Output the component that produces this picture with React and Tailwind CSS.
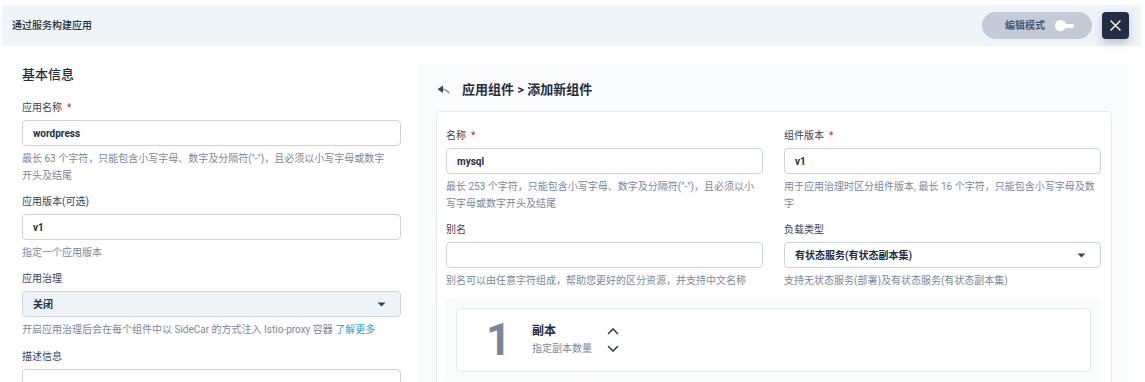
import React from "react";

const font = { fontFamily: "Roboto, 'Noto Sans CJK SC', sans-serif" };

function Label({ children, required }) {
  return (
    <div className="text-[10px] leading-4 text-[#36435c] mb-1">
      {children}
      {required && <span className="text-[#ca2621] ml-[5px]">*</span>}
    </div>
  );
}

function Input({ value }) {
  return (
    <div className="h-[26px] rounded border border-[#ccd3db] bg-white px-[10px] flex items-center text-[10px] font-bold text-[#242e42]">
      {value}
    </div>
  );
}

function Select({ value, gray }) {
  return (
    <div
      className={
        "h-[26px] rounded border border-[#ccd3db] px-[10px] flex items-center justify-between text-[10px] font-bold text-[#242e42] " +
        (gray ? "bg-[#eff4f9]" : "bg-white")
      }
    >
      <span>{value}</span>
      <svg width="9" height="5" viewBox="0 0 9 5" className="mr-[4px]">
        <path d="M0.5 0.5h8L4.5 4.5z" fill="#36435c" />
      </svg>
    </div>
  );
}

function Help({ children, narrow }) {
  return (
    <div className={"mt-1 text-[10px] leading-[17px] text-[#79879c] " + (narrow ? "pr-[10px]" : "")}>
      {children}
    </div>
  );
}

export default function App() {
  return (
    <div className="w-[1145px] h-[382px] overflow-hidden bg-white" style={font}>
      {/* header */}
      <div className="mt-[5px] ml-[2px] mr-[4px] h-[41px] bg-[#eff4f9] flex items-center justify-between pl-[10px] pr-[12px]">
        <div className="text-[10px] font-medium text-[#242e42]">通过服务构建应用</div>
        <div className="flex items-center gap-[10px]">
          <div className="w-[110px] h-[27px] rounded-full bg-[#c3ccd6] flex items-center pl-[23px] gap-[10px]">
            <span className="text-[10px] font-semibold text-[#4a5974]">编辑模式</span>
            <span className="flex items-center">
              <span className="w-[11px] h-[11px] rounded-full bg-white"></span>
              <span className="w-[9px] h-[4px] bg-white -ml-[1px] rounded-r"></span>
            </span>
          </div>
          <div className="w-[27px] h-[27px] rounded bg-[#242e42] flex items-center justify-center shadow-[0_4px_8px_rgba(36,46,66,0.25)]">
            <svg width="13" height="13" viewBox="0 0 13 13">
              <path d="M2 2l9 9M11 2L2 11" stroke="white" strokeWidth="1.4" strokeLinecap="round" />
            </svg>
          </div>
        </div>
      </div>

      <div className="flex pl-[22px]">
        {/* left column */}
        <div className="w-[379px] pt-[19px]">
          <div className="text-[13px] leading-5 font-medium text-[#242e42] mb-[15px]">基本信息</div>
          <Label required>应用名称</Label>
          <Input value="wordpress" />
          <Help narrow>最长 63 个字符，只能包含小写字母、数字及分隔符("-")，且必须以小写字母或数字开头及结尾</Help>
          <div className="mt-[10px]">
            <Label>应用版本(可选)</Label>
            <Input value="v1" />
            <Help>指定一个应用版本</Help>
          </div>
          <div className="mt-[10px]">
            <Label>应用治理</Label>
            <Select value="关闭" gray />
            <Help>
              开启应用治理后会在每个组件中以 SideCar 的方式注入 Istio-proxy 容器{" "}
              <span className="text-[#329dce]">了解更多</span>
            </Help>
          </div>
          <div className="mt-[11px]">
            <Label>描述信息</Label>
            <div className="h-[30px] rounded border border-[#ccd3db] bg-white"></div>
          </div>
        </div>

        {/* right panel */}
        <div className="ml-[17px] mt-[17px] w-[711px] h-[400px] bg-[#f9fbfd] rounded pl-[18px] pr-[17px] pt-[17px]">
          <div className="flex items-center h-5 mb-[11px]">
            <svg width="14" height="10" viewBox="0 0 14 10" className="ml-[1px] mr-[11px]">
              <path d="M0.5 4.2L6 0.5v7.4z" fill="#36435c" />
              <path d="M5 4.2c3 0 5.5 0.9 7.2 4.2" stroke="#36435c" strokeWidth="1.5" fill="none" opacity="0.55" />
            </svg>
            <span className="text-[13px] font-semibold text-[#242e42]">应用组件 &gt; 添加新组件</span>
          </div>
          <div className="bg-white border border-[#e3e9ef] rounded h-[300px] pl-[9px] pr-[10px] pt-[16px]">
            <div className="grid grid-cols-2 gap-x-[21px]">
              <div>
                <Label required>名称</Label>
                <Input value="mysql" />
                <Help>最长 253 个字符，只能包含小写字母、数字及分隔符("-")，且必须以小写字母或数字开头及结尾</Help>
              </div>
              <div>
                <Label required>组件版本</Label>
                <Input value="v1" />
                <Help>用于应用治理时区分组件版本, 最长 16 个字符，只能包含小写字母及数字</Help>
              </div>
              <div className="mt-[10px]">
                <Label>别名</Label>
                <Input value="" />
                <Help>别名可以由任意字符组成，帮助您更好的区分资源，并支持中文名称</Help>
              </div>
              <div className="mt-[10px]">
                <Label>负载类型</Label>
                <Select value="有状态服务(有状态副本集)" />
                <Help>支持无状态服务(部署)及有状态服务(有状态副本集)</Help>
              </div>
            </div>
            <div className="mt-[9px] bg-[#f9fbfd] rounded p-[10px]">
              <div className="h-[64px] bg-white border border-[#e3e9ef] rounded flex items-center pl-[29px]">
                <span className="text-[44px] leading-none font-bold text-[#79879c] w-[46px]" style={{ fontFamily: "Roboto, sans-serif" }}>1</span>
                <div className="flex flex-col">
                  <span className="text-[12px] leading-[18px] font-bold text-[#242e42]">副本</span>
                  <span className="text-[10px] leading-[18px] text-[#79879c]">指定副本数量</span>
                </div>
                <div className="flex flex-col ml-[15px] gap-[10px]">
                  <svg width="12" height="8" viewBox="0 0 12 8">
                    <path d="M1.5 6.5L6 2l4.5 4.5" stroke="#36435c" strokeWidth="1.6" fill="none" strokeLinecap="round" />
                  </svg>
                  <svg width="12" height="8" viewBox="0 0 12 8">
                    <path d="M1.5 1.5L6 6l4.5-4.5" stroke="#36435c" strokeWidth="1.6" fill="none" strokeLinecap="round" />
                  </svg>
                </div>
              </div>
            </div>
          </div>
        </div>
      </div>
    </div>
  );
}
